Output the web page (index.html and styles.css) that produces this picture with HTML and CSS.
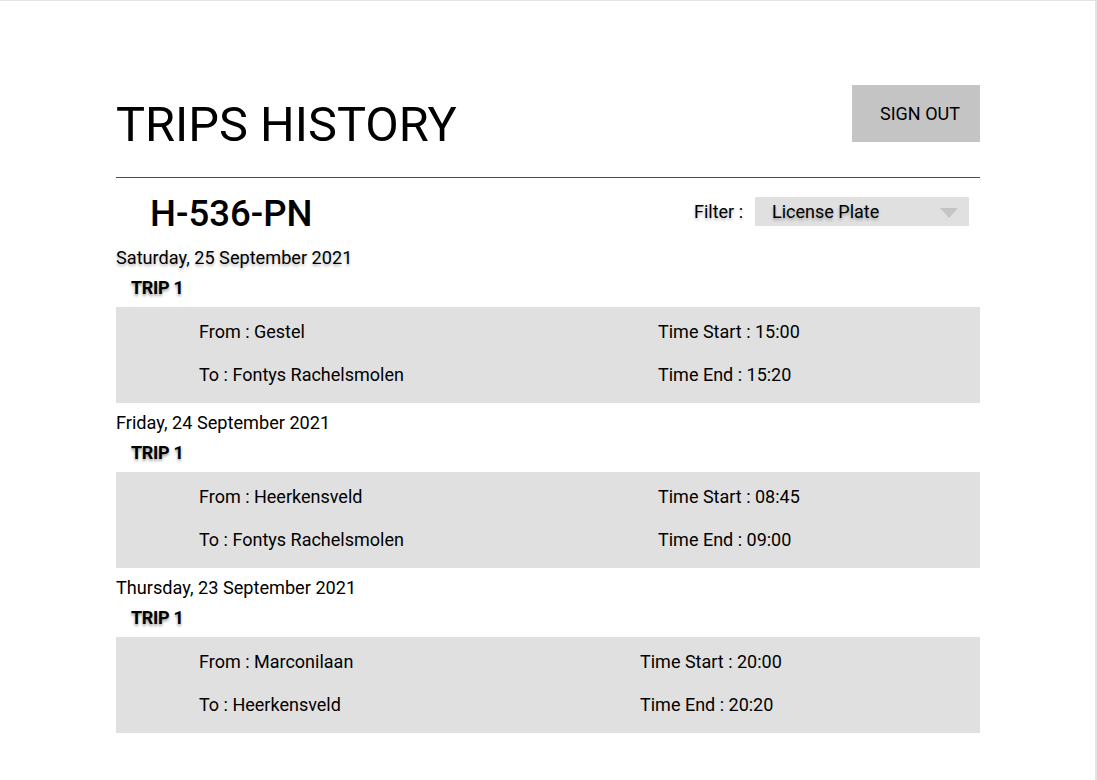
FILE: index.html
```html
<!DOCTYPE html>
<html lang="en">
<head>
<meta charset="utf-8">
<title>Trips History</title>
<link rel="stylesheet" href="styles.css">
</head>
<body>
<div class="page">
  <div class="content">
    <header class="header">
      <h1 class="title">TRIPS HISTORY</h1>
      <button class="signout">SIGN OUT</button>
    </header>
    <div class="divider"></div>
    <div class="plate-row">
      <div class="plate">H-536-PN</div>
      <div class="filter">
        <span class="filter-label shadow">Filter :</span>
        <div class="select">
          <span class="shadow">License Plate</span>
          <svg class="caret" width="18" height="10" viewBox="0 0 18 10"><path d="M0 0H18L9 10Z" fill="#c4c4c4"/></svg>
        </div>
      </div>
    </div>

    <section class="day">
      <div class="date shadow">Saturday, 25 September 2021</div>
      <div class="trip-label">TRIP 1</div>
      <div class="trip">
        <div>From : Gestel</div>
        <div>Time Start : 15:00</div>
        <div>To : Fontys Rachelsmolen</div>
        <div>Time End : 15:20</div>
      </div>
    </section>

    <section class="day">
      <div class="date">Friday, 24 September 2021</div>
      <div class="trip-label">TRIP 1</div>
      <div class="trip">
        <div>From : Heerkensveld</div>
        <div>Time Start : 08:45</div>
        <div>To : Fontys Rachelsmolen</div>
        <div>Time End : 09:00</div>
      </div>
    </section>

    <section class="day">
      <div class="date">Thursday, 23 September 2021</div>
      <div class="trip-label">TRIP 1</div>
      <div class="trip trip-narrow">
        <div>From : Marconilaan</div>
        <div>Time Start : 20:00</div>
        <div>To : Heerkensveld</div>
        <div>Time End : 20:20</div>
      </div>
    </section>
  </div>
</div>
</body>
</html>
```

FILE: styles.css
```css
* { box-sizing: border-box; }

html, body {
  margin: 0;
  padding: 0;
  background: #e3e3e3;
}

body {
  font-family: Roboto, "Liberation Sans", sans-serif;
  color: #000;
}

.page {
  width: 1095px;
  height: 780px;
  background: #fff;
  border-top: 1px solid #e3e3e3;
  overflow: hidden;
}

.content {
  margin-left: 116px;
  width: 864px;
}

.header {
  display: flex;
  justify-content: space-between;
  align-items: flex-start;
  padding-top: 84px;
}

.title {
  margin: 12px 0 0 0;
  font-size: 48.7px;
  font-weight: 400;
  line-height: 56px;
}

.signout {
  width: 128px;
  height: 57px;
  border: none;
  background: #c4c4c4;
  font-family: Roboto, "Liberation Sans", sans-serif;
  font-size: 18px;
  color: #000;
  padding: 0 0 0 8px;
  margin: 0;
}

.divider {
  margin-top: 24px;
  height: 1px;
  background: #4a4a4a;
}

.plate-row {
  display: flex;
  justify-content: space-between;
  align-items: flex-start;
  padding-top: 14px;
}

.plate {
  padding-left: 34px;
  font-size: 36.6px;
  font-weight: 500;
  line-height: 44px;
}

.filter {
  display: flex;
  align-items: center;
  gap: 12px;
  margin-top: 5px;
  margin-right: 11px;
  font-size: 18px;
}

.select {
  width: 214px;
  height: 29px;
  background: #e0e0e0;
  display: flex;
  align-items: center;
  justify-content: space-between;
  padding: 0 11px 0 17px;
}

.caret { margin-top: 2px; }

.shadow {
  text-shadow: 0 2px 3px rgba(0, 0, 0, 0.3);
}

.plate-row + .day { margin-top: 10px; }

.date {
  margin-top: 8px;
  font-size: 18.15px;
  line-height: 24px;
}

.plate-row + .day .date { margin-top: 0; }

.trip-label {
  margin-top: 6px;
  padding-left: 15px;
  font-size: 18px;
  font-weight: 700;
  line-height: 24px;
  letter-spacing: -0.3px;
  text-shadow: 0 2px 3px rgba(0, 0, 0, 0.4);
}

.trip {
  margin-top: 7px;
  height: 96px;
  background: #e0e0e0;
  display: grid;
  grid-template-columns: 459px 1fr;
  grid-auto-rows: 24px;
  align-content: start;
  row-gap: 19px;
  padding: 13px 0 0 83px;
  font-size: 18px;
  line-height: 24px;
}

.trip-narrow {
  grid-template-columns: 441px 1fr;
}
```
